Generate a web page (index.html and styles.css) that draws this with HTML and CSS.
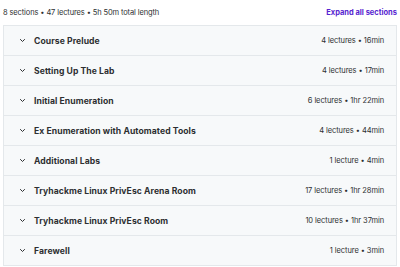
FILE: index.html
```html
<!DOCTYPE html>
<html lang="en">
<head>
    <meta charset="UTF-8">
    <title>Course content</title>
    <link rel="stylesheet" href="styles.css">
</head>
<body>
    <div class="summary">
        <span class="meta">8 sections • 47 lectures • 5h 50m total length</span>
        <button class="expand">Expand all sections</button>
    </div>
    <div class="sections">
        <div class="section">
            <span class="chevron"><svg width="7" height="5" viewBox="0 0 7 5"><path d="M1.2 1.2l2.3 2.3 2.3-2.3" fill="none" stroke="#2d2f31" stroke-width="1"/></svg></span>
            <span class="title">Course Prelude</span>
            <span class="info">4 lectures • 16min</span>
        </div>
        <div class="section">
            <span class="chevron"><svg width="7" height="5" viewBox="0 0 7 5"><path d="M1.2 1.2l2.3 2.3 2.3-2.3" fill="none" stroke="#2d2f31" stroke-width="1"/></svg></span>
            <span class="title">Setting Up The Lab</span>
            <span class="info">4 lectures • 17min</span>
        </div>
        <div class="section">
            <span class="chevron"><svg width="7" height="5" viewBox="0 0 7 5"><path d="M1.2 1.2l2.3 2.3 2.3-2.3" fill="none" stroke="#2d2f31" stroke-width="1"/></svg></span>
            <span class="title">Initial Enumeration</span>
            <span class="info">6 lectures • 1hr 22min</span>
        </div>
        <div class="section">
            <span class="chevron"><svg width="7" height="5" viewBox="0 0 7 5"><path d="M1.2 1.2l2.3 2.3 2.3-2.3" fill="none" stroke="#2d2f31" stroke-width="1"/></svg></span>
            <span class="title">Ex Enumeration with Automated Tools</span>
            <span class="info">4 lectures • 44min</span>
        </div>
        <div class="section">
            <span class="chevron"><svg width="7" height="5" viewBox="0 0 7 5"><path d="M1.2 1.2l2.3 2.3 2.3-2.3" fill="none" stroke="#2d2f31" stroke-width="1"/></svg></span>
            <span class="title">Additional Labs</span>
            <span class="info">1 lecture • 4min</span>
        </div>
        <div class="section">
            <span class="chevron"><svg width="7" height="5" viewBox="0 0 7 5"><path d="M1.2 1.2l2.3 2.3 2.3-2.3" fill="none" stroke="#2d2f31" stroke-width="1"/></svg></span>
            <span class="title">Tryhackme Linux PrivEsc Arena Room</span>
            <span class="info">17 lectures • 1hr 28min</span>
        </div>
        <div class="section">
            <span class="chevron"><svg width="7" height="5" viewBox="0 0 7 5"><path d="M1.2 1.2l2.3 2.3 2.3-2.3" fill="none" stroke="#2d2f31" stroke-width="1"/></svg></span>
            <span class="title">Tryhackme Linux PrivEsc Room</span>
            <span class="info">10 lectures • 1hr 37min</span>
        </div>
        <div class="section">
            <span class="chevron"><svg width="7" height="5" viewBox="0 0 7 5"><path d="M1.2 1.2l2.3 2.3 2.3-2.3" fill="none" stroke="#2d2f31" stroke-width="1"/></svg></span>
            <span class="title">Farewell</span>
            <span class="info">1 lecture • 3min</span>
        </div>
    </div>
</body>
</html>
```
FILE: styles.css
```css
body {
    font-family: Inter, "Liberation Sans", sans-serif;
    background-color: #ffffff;
    color: #2d2f31;
    margin: 0;
    padding: 0 3px;
}
.summary {
    display: flex;
    justify-content: space-between;
    align-items: center;
    height: 25px;
    padding-bottom: 1px;
}
.meta {
    font-size: 7.5px;
    letter-spacing: -0.12px;
    color: #2d2f31;
}
.expand {
    font-family: inherit;
    font-size: 7.5px;
    font-weight: 700;
    color: #5624d0;
    background: none;
    border: none;
    padding: 0;
}
.sections {
    margin-top: -1px;
    border: 1px solid #e4e8eb;
    border-bottom: none;
}
.section {
    display: flex;
    align-items: center;
    height: 29px;
    padding: 0 12px 0 15px;
    background-color: #f7f9fa;
    border-bottom: 1px solid #e4e8eb;
}
.chevron {
    display: flex;
    width: 15px;
}
.title {
    flex: 1;
    font-size: 8.6px;
    font-weight: 700;
    letter-spacing: 0.08px;
}
.info {
    font-size: 7.5px;
    letter-spacing: -0.08px;
    color: #2d2f31;
}
```
